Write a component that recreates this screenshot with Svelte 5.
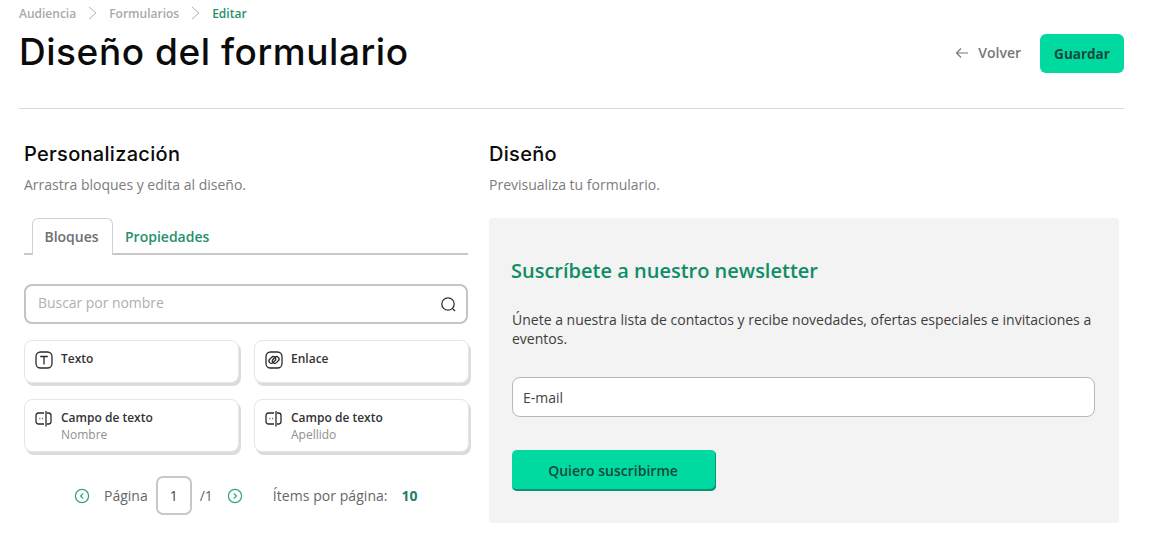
<script lang="ts">
  const crumbs = ['Audiencia', 'Formularios'];
  const blocks = [
    { title: 'Texto', sub: '', icon: 'text' },
    { title: 'Enlace', sub: '', icon: 'link' },
    { title: 'Campo de texto', sub: 'Nombre', icon: 'field' },
    { title: 'Campo de texto', sub: 'Apellido', icon: 'field' },
  ];
</script>

<div class="page">
  <header class="top">
    <nav class="crumbs">
      {#each crumbs as c}
        <span>{c}</span>
        <svg width="9" height="14" viewBox="0 0 9 14" fill="none" stroke="#b5b5b5" stroke-width="1"><path d="M1 1 L8 7 L1 13" /></svg>
      {/each}
      <span class="current">Editar</span>
    </nav>
    <div class="title-row">
      <h1>Diseño del formulario</h1>
      <div class="actions">
        <a class="back" href="#top">
          <svg width="14" height="12" viewBox="0 0 14 12" fill="none" stroke="#777" stroke-width="1.2"><path d="M13 6 H1.5 M6 1.5 L1.5 6 L6 10.5" /></svg>
          Volver
        </a>
        <button class="save">Guardar</button>
      </div>
    </div>
  </header>

  <main class="columns">
    <section class="left">
      <h2>Personalización</h2>
      <p class="hint">Arrastra bloques y edita al diseño.</p>

      <div class="tabs">
        <span class="tab active">Bloques</span>
        <span class="tab">Propiedades</span>
      </div>

      <div class="search">
        <span>Buscar por nombre</span>
        <svg width="17" height="17" viewBox="0 0 17 17" fill="none" stroke="#333" stroke-width="1.3"><circle cx="8" cy="8" r="6.2" /><path d="M12.6 12.6 L15 15" /></svg>
      </div>

      <div class="grid">
        {#each blocks as b}
          <div class="card" class:tall={b.sub}>
            <span class="card-icon">
              {#if b.icon === 'text'}
                <svg width="18" height="18" viewBox="0 0 18 18" fill="none" stroke="#2b2b2b" stroke-width="1.3"><rect x="1" y="1" width="16" height="16" rx="4.5" /><path d="M5.2 5.5 H12.8 M9 5.5 V13.5" /></svg>
              {:else if b.icon === 'link'}
                <svg width="18" height="18" viewBox="0 0 18 18" fill="none" stroke="#2b2b2b" stroke-width="1.3"><rect x="1" y="1" width="16" height="16" rx="4.5" /><rect x="3.6" y="6.6" width="7.4" height="4.8" rx="2.4" transform="rotate(-45 7.3 9)" /><rect x="7" y="6.6" width="7.4" height="4.8" rx="2.4" transform="rotate(-45 10.7 9)" /></svg>
              {:else}
                <svg width="18" height="18" viewBox="0 0 18 18" fill="none" stroke="#2b2b2b" stroke-width="1.3"><path d="M9 3 H3.5 A2.5 2.5 0 0 0 1 5.5 V11.5 A2.5 2.5 0 0 0 3.5 14 H9 M12 3 H13.5 A2.5 2.5 0 0 1 16 5.5 V11.5 A2.5 2.5 0 0 1 13.5 14 H12 M11 1 V16.5 M4.5 8.5 H5.3 M7.3 8.5 H8.1" /></svg>
              {/if}
            </span>
            <div class="card-text">
              <strong>{b.title}</strong>
              {#if b.sub}<small>{b.sub}</small>{/if}
            </div>
          </div>
        {/each}
      </div>

      <div class="pager">
        <svg class="nav" width="16" height="16" viewBox="0 0 16 16" fill="none" stroke="#3aa583" stroke-width="1.3"><circle cx="8" cy="8" r="6.6" /><path d="M9.2 5.4 L6.6 8 L9.2 10.6" /></svg>
        <span class="page-label">Página</span>
        <span class="page-box">1</span>
        <span class="page-total">/1</span>
        <svg class="nav" width="16" height="16" viewBox="0 0 16 16" fill="none" stroke="#3aa583" stroke-width="1.3"><circle cx="8" cy="8" r="6.6" /><path d="M6.8 5.4 L9.4 8 L6.8 10.6" /></svg>
        <span class="per-page">Ítems por página:</span>
        <b>10</b>
      </div>
    </section>

    <section class="right">
      <h2>Diseño</h2>
      <p class="hint">Previsualiza tu formulario.</p>

      <div class="preview">
        <h3>Suscríbete a nuestro newsletter</h3>
        <p>Únete a nuestra lista de contactos y recibe novedades, ofertas especiales e invitaciones a eventos.</p>
        <div class="email">E-mail</div>
        <button class="subscribe">Quiero suscribirme</button>
      </div>
    </section>
  </main>
</div>

<style>
  :global(body) {
    margin: 0;
    background: #fff;
    font-family: 'Open Sans', 'Noto Sans', sans-serif;
  }

  .page {
    width: 1149px;
    height: 556px;
    box-sizing: border-box;
    padding: 5px 25px 0 19px;
    overflow: hidden;
  }

  .top {
    border-bottom: 1px solid #d9d9d9;
    height: 104px;
    box-sizing: border-box;
  }

  .crumbs {
    display: flex;
    align-items: center;
    gap: 12px;
    height: 16px;
    font-size: 12px;
    font-weight: 600;
    color: #a9a9a9;
  }

  .crumbs .current {
    color: #23916f;
  }

  .title-row {
    display: flex;
    justify-content: space-between;
    align-items: center;
    padding-top: 8px;
  }

  h1 {
    margin: 0;
    font-family: Inter, 'Noto Sans', sans-serif;
    font-size: 37px;
    font-weight: 500;
    line-height: 46px;
    letter-spacing: 0.55px;
    color: #0b0b0b;
  }

  .actions {
    display: flex;
    align-items: center;
    gap: 19px;
    margin-top: 3px;
  }

  .back {
    display: flex;
    align-items: center;
    gap: 9px;
    margin-bottom: 2px;
    font-size: 14px;
    font-weight: 600;
    color: #777;
    text-decoration: none;
  }

  button {
    border: 0;
    font-family: inherit;
    font-weight: 700;
    color: #154a3a;
    background: #00d9a0;
  }

  .save {
    width: 84px;
    height: 39px;
    border-radius: 6px;
    font-size: 13.5px;
    padding: 0;
  }

  .columns {
    display: flex;
    gap: 21px;
    padding: 31px 5px 0 5px;
  }

  .left {
    width: 444px;
    flex: none;
  }

  .right {
    width: 630px;
    flex: none;
  }

  h2 {
    margin: 0;
    font-family: Inter, 'Noto Sans', sans-serif;
    font-size: 20px;
    font-weight: 500;
    line-height: 28px;
    letter-spacing: 0.3px;
    color: #0b0b0b;
  }

  .hint {
    margin: 8px 0 0;
    font-size: 14px;
    line-height: 18px;
    color: #7c7c7c;
  }

  .tabs {
    display: flex;
    margin-top: 24px;
    padding-left: 8px;
    height: 37px;
    box-sizing: border-box;
    border-bottom: 2px solid #c8c8c8;
  }

  .tab {
    display: flex;
    align-items: center;
    justify-content: center;
    height: 37px;
    box-sizing: border-box;
    padding: 0 12px;
    font-size: 14px;
    font-weight: 600;
    color: #23916f;
  }

  .tab.active {
    width: 81px;
    padding: 0 2px 2px 0;
    font-weight: 600;
    color: #6f6f6f;
    background: #fff;
    border: 1px solid #d0d0d0;
    border-bottom: 0;
    border-radius: 6px 6px 0 0;
  }

  .search {
    display: flex;
    justify-content: space-between;
    align-items: center;
    margin-top: 29px;
    height: 40px;
    box-sizing: border-box;
    padding: 0 9px 3px 12px;
    border: 2px solid #c4c4c4;
    border-radius: 8px;
    font-size: 14px;
    letter-spacing: -0.05px;
    color: #b0b0b0;
  }

  .search svg {
    margin-top: 3px;
  }

  .grid {
    display: grid;
    grid-template-columns: 215px 215px;
    column-gap: 15px;
    row-gap: 16px;
    margin-top: 16px;
  }

  .card {
    display: flex;
    gap: 8px;
    height: 43px;
    box-sizing: border-box;
    padding: 10px 10px 0 10px;
    background: #fff;
    border: 1px solid #e6e6e6;
    border-radius: 8px;
    box-shadow: 2px 3px 0 #dcdcdc;
  }

  .card.tall {
    height: 53px;
  }

  .card-icon {
    display: block;
    height: 18px;
    flex: none;
  }

  .card-text {
    display: flex;
    flex-direction: column;
    margin-top: -1px;
  }

  .card-text strong {
    font-size: 12px;
    font-weight: 600;
    line-height: 17px;
    color: #333;
  }

  .card-text small {
    font-size: 12px;
    line-height: 17px;
    color: #8f8f8f;
  }

  .pager {
    display: flex;
    align-items: center;
    margin-top: 24px;
    padding-left: 50px;
    font-size: 14px;
    color: #666;
  }

  .page-label {
    margin-left: 14px;
  }

  .page-box {
    display: flex;
    align-items: center;
    justify-content: center;
    width: 36px;
    height: 39px;
    box-sizing: border-box;
    margin-left: 8px;
    border: 2px solid #c8c8c8;
    border-radius: 7px;
    font-size: 14px;
    color: #444;
  }

  .page-total {
    margin: 0 14px 0 8px;
    font-size: 14px;
  }

  .per-page {
    margin-left: 30px;
    letter-spacing: 0.05px;
  }

  .pager b {
    margin-left: 14px;
    font-size: 14px;
    font-weight: 700;
    color: #23806a;
  }

  .preview {
    margin-top: 24px;
    height: 305px;
    box-sizing: border-box;
    padding: 39px 24px 0 23px;
    background: #f3f3f3;
    border-radius: 4px;
  }

  h3 {
    margin: 0 0 0 -1px;
    font-size: 20px;
    font-weight: 600;
    line-height: 28px;
    color: #0f8d68;
  }

  .preview p {
    margin: 25px 0 0;
    font-size: 14px;
    line-height: 19px;
    color: #3d3d3d;
  }

  .email {
    display: flex;
    align-items: center;
    margin-top: 29px;
    height: 40px;
    box-sizing: border-box;
    padding: 0 10px;
    background: #fff;
    border: 1.5px solid #b8b8b8;
    border-radius: 8px;
    font-size: 14px;
    color: #444;
  }

  .subscribe {
    display: block;
    width: 204px;
    height: 41px;
    margin-top: 33px;
    padding: 0 2px 0 0;
    border-radius: 5px;
    box-shadow: inset -1px -2px 0 #0a9474;
    font-size: 14px;
    font-weight: 600;
  }
</style>
